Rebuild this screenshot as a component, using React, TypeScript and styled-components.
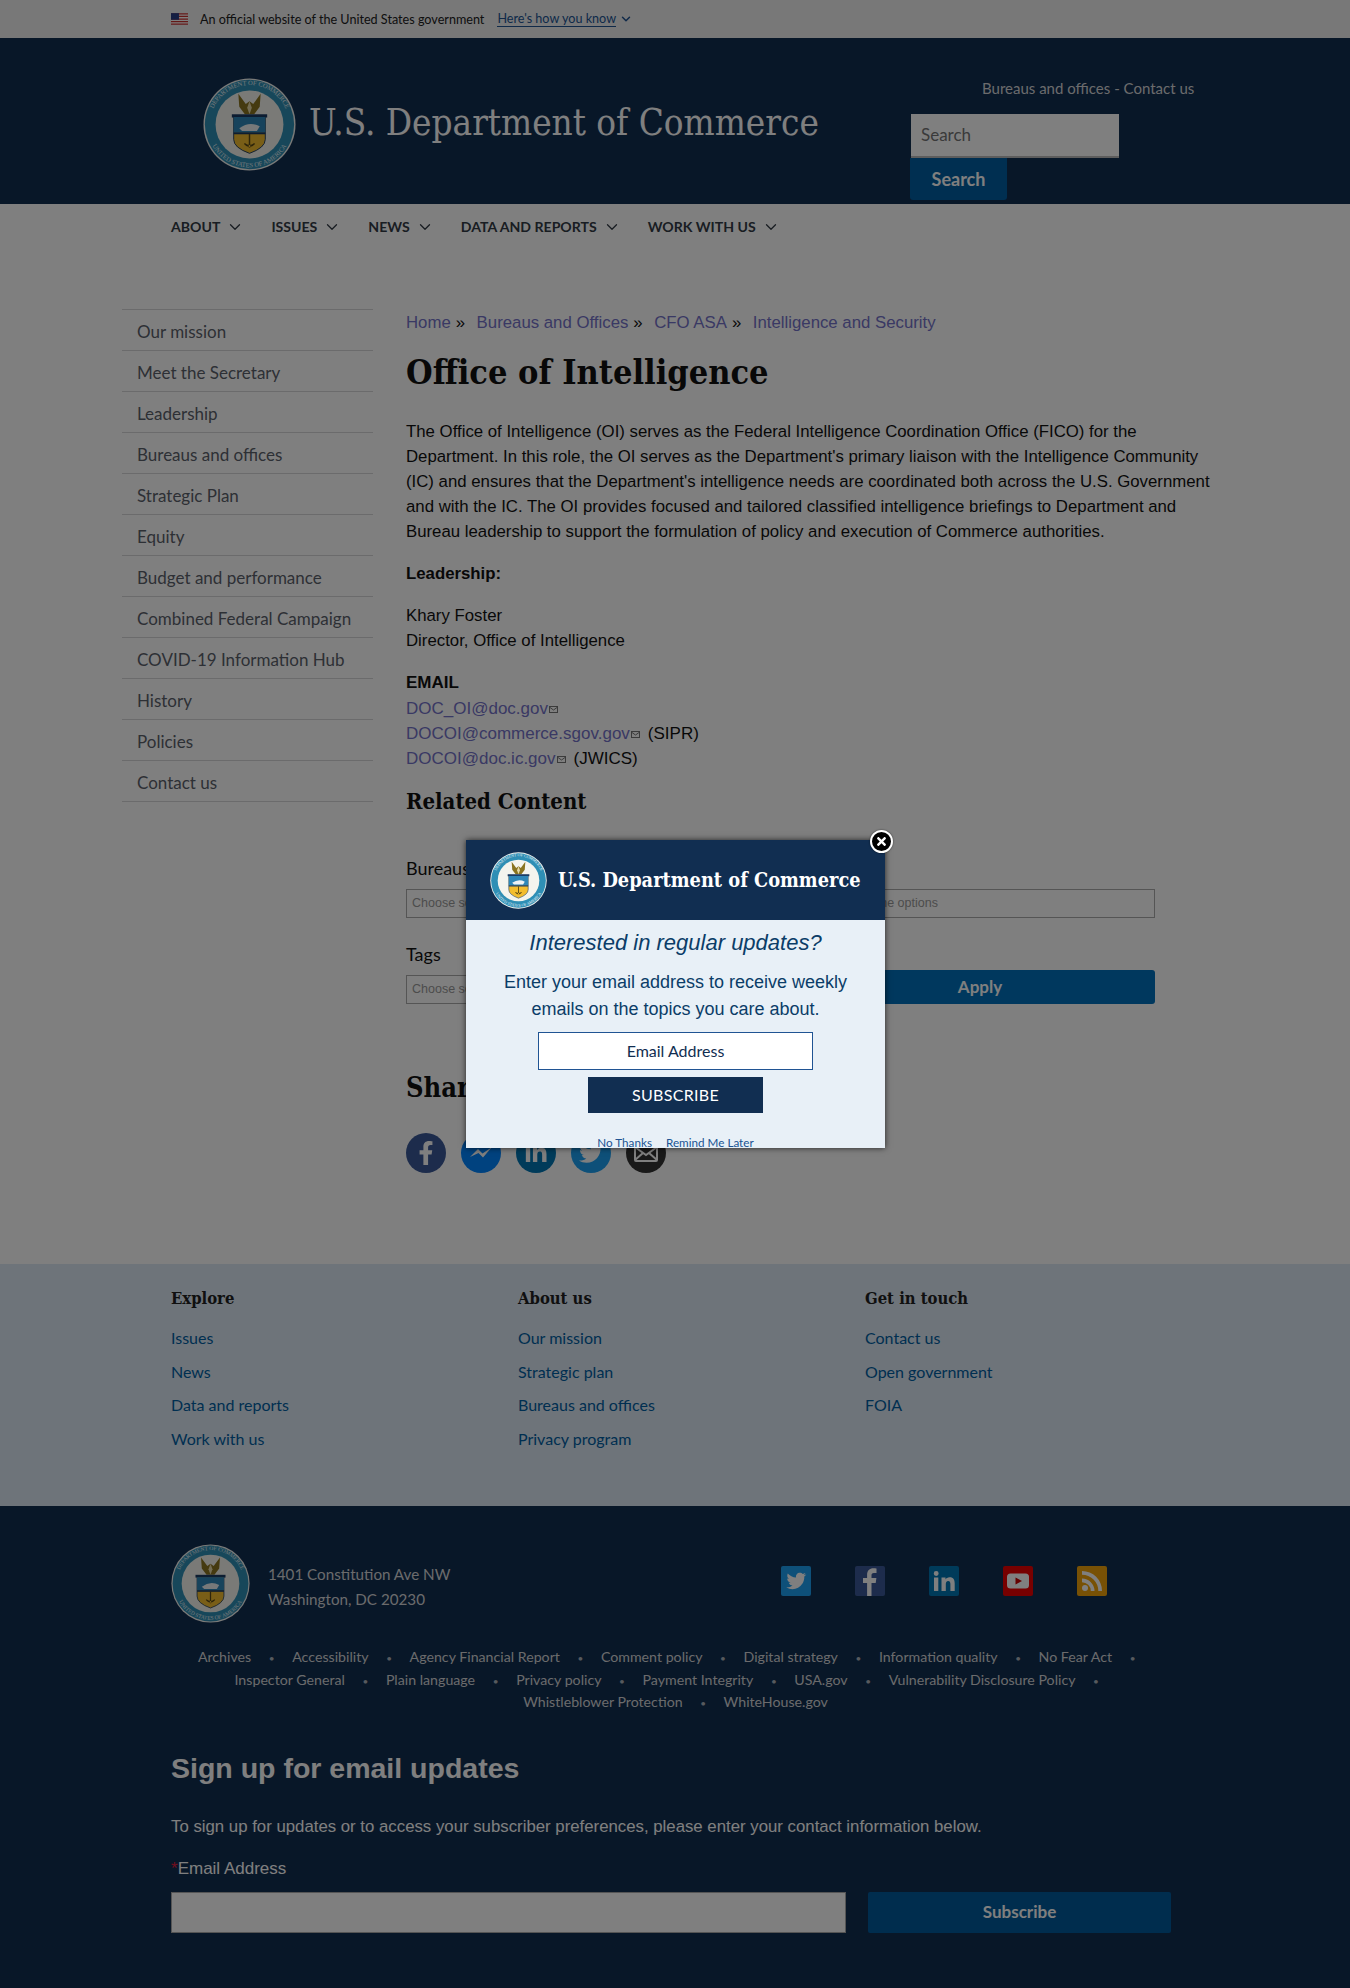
import React from 'react'
import styled, { createGlobalStyle } from 'styled-components'
import { ChevronDown } from 'lucide-react'
import { FaFacebookF, FaLinkedinIn, FaTwitter, FaTimes } from 'react-icons/fa'

const sans = `'Lato', 'Noto Sans', sans-serif`
const serif = `'DejaVu Serif Condensed', 'DejaVu Serif', serif`
const arial = `'Liberation Sans', Arial, sans-serif`

const GlobalStyle = createGlobalStyle`
  html, body { margin: 0; padding: 0; background: #fff; }
  * { box-sizing: border-box; }
  a { text-decoration: none; color: inherit; }
`

const Page = styled.div`
  position: relative;
  width: 1350px;
  height: 1988px;
  overflow: hidden;
  font-family: ${sans};
  background: #fff;
`

const GovBanner = styled.div`
  height: 38px;
  background: #f0f0f0;
  padding-left: 171px;
  display: flex;
  align-items: center;
  font-size: 12.6px;
  color: #212121;
`
const Flag = styled.svg`
  width: 17px;
  height: 12px;
  margin-right: 12px;
`
const HowLink = styled.a`
  color: #205493;
  border-bottom: 1px solid #205493;
  margin-left: 13px;
`

const Header = styled.header`
  height: 166px;
  background: #112e51;
  display: flex;
  padding: 40px 0 0 203px;
`
const SiteTitle = styled.div`
  font-family: ${serif};
  font-size: 36.5px;
  color: #fff;
  margin: 23px 0 0 13px;
  width: 600px;
  white-space: nowrap;
`
const HeaderRight = styled.div`
  display: flex;
  flex-direction: column;
  align-items: flex-start;
  margin-left: 2px;
`
const TopLinks = styled.div`
  font-size: 15px;
  color: #d6d7d9;
  margin: 0 0 16px 71px;
  line-height: 20px;
  white-space: nowrap;
`
const HeaderSearch = styled.div`
  width: 208px;
  height: 44px;
  background: #fff;
  border-bottom: 2px solid #bbb;
  color: #757575;
  font-size: 17px;
  line-height: 42px;
  padding-left: 10px;
`
const HeaderSearchButton = styled.div`
  width: 97px;
  height: 42px;
  margin-left: -1px;
  background: #005ea2;
  color: #fff;
  font-size: 18px;
  font-weight: 700;
  text-align: center;
  line-height: 42px;
  border-radius: 0 0 3px 3px;
`

const Nav = styled.nav`
  height: 105px;
  padding: 12px 0 0 171px;
  display: flex;
  align-items: flex-start;
  gap: 27px;
  background: #fff;
`
const NavItem = styled.a`
  display: flex;
  align-items: center;
  gap: 6px;
  font-size: 14.1px;
  font-weight: 700;
  color: #323a45;
  line-height: 22px;
`

const Content = styled.div`
  display: flex;
  height: 955px;
  padding-left: 122px;
`
const Sidebar = styled.ul`
  list-style: none;
  margin: 0;
  padding: 0;
  width: 251px;
  align-self: flex-start;
  border-top: 1px solid #d6d7d9;
`
const SideItem = styled.li`
  height: 41px;
  line-height: 43px;
  padding-left: 15px;
  font-size: 17px;
  color: #5b616b;
  border-bottom: 1px solid #d6d7d9;
`

const Main = styled.main`
  width: 810px;
  margin-left: 33px;
  font-family: ${arial};
  font-size: 16.8px;
  line-height: 25px;
  color: #111;
`
const Crumbs = styled.div`
  font-size: 16.8px;
  display: flex;
  gap: 5px;
  line-height: 26px;
  padding-top: 1px;
`
const Crumb = styled.a`
  color: #7472c8;
  & + span { margin-right: 6.500px; }
`
const Title = styled.h1`
  font-family: ${serif};
  font-size: 34px;
  line-height: 44px;
  font-weight: 700;
  margin: 14px 0 25px;
  color: #111;
`
const Para = styled.p`
  margin: 0 0 17px;
`
const BoldLine = styled.strong`
  display: block;
`
const EmailHead = styled.div`
  font-weight: 700;
  font-size: 17px;
  line-height: 26px;
`
const MailLine = styled.div`
  font-size: 17px;
`
const MailLink = styled.a`
  color: #7472c8;
`
const MailGlyph = styled.svg`
  width: 9px;
  height: 7px;
  margin: 0 8px 0 1px;
  vertical-align: 1px;
`
const Related = styled.h2`
  font-family: ${serif};
  font-size: 22px;
  line-height: 30px;
  font-weight: 700;
  margin: 15px 0 0;
`
const FilterRow = styled.div<{ $top: number }>`
  display: flex;
  margin-top: ${p => p.$top}px;
  width: 749px;
  justify-content: space-between;
  align-items: flex-end;
`
const Field = styled.div<{ $w: number }>`
  width: ${p => p.$w}px;
`
const FieldLabel = styled.div`
  font-family: ${sans};
  font-size: 18px;
  line-height: 24px;
  margin-bottom: 9px;
`
const Choose = styled.div`
  height: 29px;
  border: 1px solid #aaa;
  background: #fff;
  color: #999;
  font-size: 12.5px;
  line-height: 27px;
  padding-left: 5px;
`
const ApplyButton = styled.div`
  height: 34px;
  width: 350px;
  background: #0071bc;
  border-radius: 3px;
  color: #fff;
  font-family: ${sans};
  font-weight: 700;
  font-size: 17px;
  text-align: center;
  line-height: 34px;
`
const ShareTitle = styled.h2`
  font-family: ${serif};
  font-size: 27px;
  line-height: 34px;
  font-weight: 700;
  margin: 67px 0 28px;
`
const ShareRow = styled.div`
  display: flex;
  gap: 15px;
`
const ShareIcon = styled.a<{ $bg: string }>`
  width: 40px;
  height: 40px;
  border-radius: 50%;
  background: ${p => p.$bg};
  color: #fff;
  display: flex;
  align-items: center;
  justify-content: center;
  font-size: 24px;
`

const FooterLinks = styled.section`
  height: 242px;
  background: #dce8f4;
  padding: 24px 0 0 171px;
  display: grid;
  grid-template-columns: repeat(3, 347px);
`
const FootHeading = styled.div`
  font-family: ${serif};
  font-weight: 700;
  font-size: 16.5px;
  line-height: 22px;
  color: #212121;
  margin-bottom: 11px;
`
const FootLink = styled.a`
  display: block;
  font-size: 16px;
  line-height: 33.5px;
  color: #005ea2;
`

const FooterDark = styled.footer`
  height: 482px;
  background: #112e51;
  padding: 38px 179px 0 171px;
  color: #fff;
`
const FootTop = styled.div`
  display: flex;
  align-items: center;
  height: 79px;
`
const Address = styled.div`
  font-size: 15.2px;
  line-height: 25px;
  color: #d6d7d9;
  margin: 7px 0 0 18px;
  width: 513px;
`
const Socials = styled.div`
  display: flex;
  gap: 44px;
  margin-top: -6px;
`
const SocialBox = styled.svg`
  width: 30px;
  height: 30px;
  display: block;
`
const LegalLinks = styled.div`
  margin: 23px 0 0 -3px;
  width: 1015px;
  text-align: center;
  font-size: 14.2px;
  line-height: 22.5px;
  color: #d6d7d9;
`
const Dot = styled.span`
  display: inline-block;
  width: 41px;
  text-align: center;
  font-size: 10px;
  line-height: 1;
  opacity: .8;
`
const SignTitle = styled.h2`
  font-family: ${arial};
  font-size: 28.5px;
  line-height: 34px;
  font-weight: 700;
  color: #fff;
  margin: 37px 0 0;
`
const SignPara = styled.p`
  font-family: ${arial};
  font-size: 16.8px;
  line-height: 24px;
  color: #fff;
  margin: 30px 0 0;
`
const SignLabel = styled.div`
  font-family: ${arial};
  font-size: 17px;
  line-height: 22px;
  color: #fff;
  margin-top: 19px;
`
const Req = styled.span`
  color: #e31c3d;
`
const SignRow = styled.div`
  display: flex;
  gap: 22px;
  margin-top: 12px;
`
const SignInput = styled.div`
  width: 675px;
  height: 41px;
  background: #fff;
  border: 1px solid #aaa;
`
const SignButton = styled.div`
  width: 303px;
  height: 41px;
  background: #005a9c;
  border-radius: 2px;
  color: #fff;
  font-size: 17px;
  font-weight: 700;
  text-align: center;
  line-height: 40px;
`

const Overlay = styled.div`
  position: absolute;
  inset: 0;
  background: rgba(0, 0, 0, 0.5);
`
const Modal = styled.div`
  position: absolute;
  left: 466px;
  top: 840px;
  width: 419px;
  height: 308px;
  background: #e8f0f7;
  box-shadow: 0 0 6px rgba(0, 0, 0, 0.7);
  text-align: center;
`
const ModalHead = styled.div`
  height: 80px;
  background: #112e51;
  display: flex;
  align-items: center;
  padding-left: 24px;
`
const ModalBrand = styled.div`
  font-family: ${serif};
  font-weight: 700;
  font-size: 19.8px;
  color: #fff;
  margin-left: 11px;
  white-space: nowrap;
`
const ModalClose = styled.div`
  position: absolute;
  top: -10px;
  right: -8px;
  width: 23px;
  height: 23px;
  border-radius: 50%;
  background: #000;
  border: 2px solid #fff;
  color: #fff;
  display: flex;
  align-items: center;
  justify-content: center;
  font-size: 13px;
  box-shadow: 0 0 2px rgba(0,0,0,.6);
`
const ModalTitle = styled.div`
  font-family: ${arial};
  font-style: italic;
  font-size: 22px;
  line-height: 26px;
  color: #0b3d68;
  margin-top: 10px;
`
const ModalText = styled.div`
  font-family: ${arial};
  font-size: 18px;
  line-height: 27px;
  color: #0b3d68;
  margin-top: 13px;
`
const ModalInput = styled.div`
  width: 275px;
  height: 38px;
  margin: 9px auto 0;
  background: #fff;
  border: 1px solid #205493;
  font-size: 16px;
  line-height: 36px;
  color: #112e51;
`
const ModalButton = styled.div`
  width: 175px;
  height: 36px;
  margin: 7px auto 0;
  background: #112e51;
  color: #fff;
  font-size: 16px;
  line-height: 36px;
  letter-spacing: .3px;
`
const ModalFoot = styled.div`
  display: flex;
  justify-content: center;
  gap: 14px;
  margin-top: 22px;
  font-size: 11.7px;
  line-height: 14px;
  color: #205493;
`

// simplified department seal, scales with the size prop
const Seal: React.FC<{ size: number }> = ({ size }) => (
  <svg width={size} height={size} viewBox="0 0 100 100" style={{ flex: 'none' }}>
    <defs>
      <path id="sealTop" d="M7.500 50a42.500 42.500 0 0 1 85 0" />
      <path id="sealBottom" d="M4 50a46 46 0 0 0 92 0" />
    </defs>
    <circle cx="50" cy="50" r="49.500" fill="#f4f4f0" />
    <circle cx="50" cy="50" r="48" fill="#2f8fb5" />
    <circle cx="50" cy="50" r="36.500" fill="#f4f4ee" />
    <text fontFamily="'Liberation Serif', serif" fontSize="7" fill="#e6f1f5" textAnchor="middle">
      <textPath href="#sealTop" startOffset="50%">DEPARTMENT OF COMMERCE</textPath>
    </text>
    <text fontFamily="'Liberation Serif', serif" fontSize="7" fill="#e6f1f5" textAnchor="middle">
      <textPath href="#sealBottom" startOffset="50%">UNITED STATES OF AMERICA</textPath>
    </text>
    <path d="M38 17 L46 28 L50 25 L54 28 L62 17 L61 31 L55 39 H45 L39 31 Z" fill="#8a7420" />
    <path d="M50 25 L47.500 32 L50 39 L52.500 32 Z" fill="#e6d9a8" />
    <rect x="31" y="39" width="38" height="3.500" fill="#1b3a63" />
    <path d="M33 42 H67 V66 Q67 75 50 81 Q33 75 33 66 Z" fill="#f3bd2e" stroke="#1b3a63" strokeWidth="1" />
    <path d="M33 42 H67 V59 H33 Z" fill="#2f87b8" />
    <path d="M39 54 Q50 46 61 52 L58 57 H42 Z" fill="#eef2f5" />
    <rect x="33" y="58.500" width="34" height="2" fill="#1b3a63" />
    <path d="M49.200 60 H50.800 V75 H49.200 Z M44 71 Q50 78 56 71 L55 70 Q50 74 45 70 Z" fill="#5d4a14" />
  </svg>
)

const Envelope = () => (
  <MailGlyph viewBox="0 0 9 7">
    <rect x="0.5" y="0.5" width="8" height="6" fill="none" stroke="#777" />
    <path d="M1 1.500 L4.500 4 L8 1.500" fill="none" stroke="#777" />
  </MailGlyph>
)

const sideLinks = [
  'Our mission', 'Meet the Secretary', 'Leadership', 'Bureaus and offices', 'Strategic Plan', 'Equity',
  'Budget and performance', 'Combined Federal Campaign', 'COVID-19 Information Hub', 'History', 'Policies', 'Contact us',
]
const navItems = ['ABOUT', 'ISSUES', 'NEWS', 'DATA AND REPORTS', 'WORK WITH US']
const legal = [
  'Archives', 'Accessibility', 'Agency Financial Report', 'Comment policy', 'Digital strategy', 'Information quality', 'No Fear Act',
  'Inspector General', 'Plain language', 'Privacy policy', 'Payment Integrity', 'USA.gov', 'Vulnerability Disclosure Policy',
  'Whistleblower Protection', 'WhiteHouse.gov',
]

const footerCols = [
  { head: 'Explore', links: ['Issues', 'News', 'Data and reports', 'Work with us'] },
  { head: 'About us', links: ['Our mission', 'Strategic plan', 'Bureaus and offices', 'Privacy program'] },
  { head: 'Get in touch', links: ['Contact us', 'Open government', 'FOIA'] },
]

const App: React.FC = () => (
  <Page>
    <GlobalStyle />
    <GovBanner>
      <Flag viewBox="0 0 16 11">
        <rect width="16" height="11" fill="#fff" />
        <path d="M0 0H16V1.200H0ZM0 2.500H16V3.700H0ZM0 5H16V6.200H0ZM0 7.400H16V8.600H0ZM0 9.800H16V11H0Z" fill="#c8312f" />
        <rect width="7.500" height="6.200" fill="#2b3f86" />
      </Flag>
      An official website of the United States government
      <HowLink>Here's how you know</HowLink>
      <ChevronDown size={14} strokeWidth={2.5} color="#205493" style={{ marginLeft: 3 }} />
    </GovBanner>
    <Header>
      <Seal size={93} />
      <SiteTitle>U.S. Department of Commerce</SiteTitle>
      <HeaderRight>
        <TopLinks>Bureaus and offices - Contact us</TopLinks>
        <HeaderSearch>Search</HeaderSearch>
        <HeaderSearchButton>Search</HeaderSearchButton>
      </HeaderRight>
    </Header>
    <Nav>
      {navItems.map(n => (
        <NavItem key={n}>
          {n}
          <ChevronDown size={18} strokeWidth={1.75} />
        </NavItem>
      ))}
    </Nav>
    <Content>
      <Sidebar>
        {sideLinks.map(s => <SideItem key={s}>{s}</SideItem>)}
      </Sidebar>
      <Main>
        <Crumbs>
          <Crumb>Home</Crumb><span>»</span>
          <Crumb>Bureaus and Offices</Crumb><span>»</span>
          <Crumb>CFO ASA</Crumb><span>»</span>
          <Crumb>Intelligence and Security</Crumb>
        </Crumbs>
        <Title>Office of Intelligence</Title>
        <Para>
          The Office of Intelligence (OI) serves as the Federal Intelligence Coordination Office (FICO) for the
          Department. In this role, the OI serves as the Department's primary liaison with the Intelligence Community
          (IC) and ensures that the Department's intelligence needs are coordinated both across the U.S. Government
          and with the IC. The OI provides focused and tailored classified intelligence briefings to Department and
          Bureau leadership to support the formulation of policy and execution of Commerce authorities.
        </Para>
        <Para><BoldLine>Leadership:</BoldLine></Para>
        <Para>Khary Foster<br />Director, Office of Intelligence</Para>
        <EmailHead>EMAIL</EmailHead>
        <MailLine><MailLink>DOC_OI@doc.gov</MailLink><Envelope /></MailLine>
        <MailLine><MailLink>DOCOI@commerce.sgov.gov</MailLink><Envelope />(SIPR)</MailLine>
        <MailLine><MailLink>DOCOI@doc.ic.gov</MailLink><Envelope />(JWICS)</MailLine>
        <Related>Related Content</Related>
        <FilterRow $top={40}>
          <Field $w={384}><FieldLabel>Bureaus</FieldLabel><Choose>Choose some options</Choose></Field>
          <Field $w={344}><FieldLabel>&nbsp;</FieldLabel><Choose>Choose some options</Choose></Field>
        </FilterRow>
        <FilterRow $top={24}>
          <Field $w={384}><FieldLabel>Tags</FieldLabel><Choose>Choose some options</Choose></Field>
          <ApplyButton>Apply</ApplyButton>
        </FilterRow>
        <ShareTitle>Share</ShareTitle>
        <ShareRow>
          <ShareIcon $bg="#3b5998"><FaFacebookF /></ShareIcon>
          <ShareIcon $bg="#0084ff">
            <svg width="28" height="28" viewBox="0 0 28 28">
              <path d="M3 18 L11 10 L15.500 14.500 L25 8 L16 18.500 L11.500 14 Z" fill="#fff" />
            </svg>
          </ShareIcon>
          <ShareIcon $bg="#0077b5"><FaLinkedinIn /></ShareIcon>
          <ShareIcon $bg="#1da1f2"><FaTwitter /></ShareIcon>
          <ShareIcon $bg="#333">
            <svg width="28" height="28" viewBox="0 0 28 28" fill="none" stroke="#fff" strokeWidth="2">
              <rect x="3" y="7" width="22" height="15" rx="1" />
              <path d="M3 8 L14 16 L25 8 M3 21 L11 14 M25 21 L17 14" />
            </svg>
          </ShareIcon>
        </ShareRow>
      </Main>
    </Content>
    <FooterLinks>
      {footerCols.map(c => (
        <div key={c.head}>
          <FootHeading>{c.head}</FootHeading>
          {c.links.map(l => <FootLink key={l}>{l}</FootLink>)}
        </div>
      ))}
    </FooterLinks>
    <FooterDark>
      <FootTop>
        <Seal size={79} />
        <Address>1401 Constitution Ave NW<br />Washington, DC 20230</Address>
        <Socials>
          <SocialBox viewBox="0 0 30 30">
            <rect width="30" height="30" rx="2" fill="#1da1f2" />
            <path d="M25 8.600c-.8.3-1.600.6-2.400.7.900-.5 1.500-1.300 1.800-2.300-.800.500-1.700.8-2.600 1-1.700-1.800-4.600-1.500-6 .2-.8 1-1 2.200-.7 3.400C11.700 11.400 8.800 9.900 6.800 7.500c-1.100 1.900-.5 4.300 1.300 5.500-.700 0-1.300-.2-1.900-.5 0 2 1.400 3.700 3.300 4.100-.600.200-1.200.2-1.800.1.500 1.600 2 2.800 3.800 2.800-1.800 1.400-4.100 2-6.300 1.800 5.500 3.500 12.700 1.900 16.100-3.500 1.400-2.200 2.100-4.800 2-7.400.8-.5 1.500-1.200 2-1.900z" fill="#fff" />
          </SocialBox>
          <SocialBox viewBox="0 0 30 30">
            <rect width="30" height="30" rx="2" fill="#3b5998" />
            <path d="M16.500 30V17h4.200l.7-5h-4.900V9.300c0-1.400.5-2.400 2.400-2.400h2.600V2.400C21 2.300 19.700 2.200 18.400 2.200c-3.800 0-6.300 2.300-6.300 6.500V12H8v5h4.100v13z" fill="#fff" />
          </SocialBox>
          <SocialBox viewBox="0 0 30 30">
            <rect width="30" height="30" rx="2" fill="#0077b5" />
            <path d="M5 11.500h4.300V25H5zM7.200 5a2.400 2.400 0 1 1 0 4.900 2.400 2.400 0 0 1 0-4.900zM12.500 11.500h4v1.900c.700-1.200 2.100-2.200 4.100-2.200 4 0 5.100 2.600 5.100 6.200V25h-4.300v-6.800c0-1.700-.4-3.200-2.200-3.200s-2.400 1.500-2.400 3.200V25h-4.300z" fill="#fff" />
          </SocialBox>
          <SocialBox viewBox="0 0 30 30">
            <rect width="30" height="30" rx="2" fill="#e00" />
            <rect x="4" y="7.500" width="22" height="15" rx="3.500" fill="#fff" />
            <path d="M12.500 11.500 L19 15 L12.500 18.500Z" fill="#c00" />
          </SocialBox>
          <SocialBox viewBox="0 0 30 30">
            <rect width="30" height="30" rx="2" fill="#f0a30a" />
            <circle cx="8" cy="22" r="3" fill="#fff" />
            <path d="M5 12.500a12.500 12.500 0 0 1 12.500 12.500h-3.700A8.800 8.800 0 0 0 5 16.200zM5 5a20 20 0 0 1 20 20h-3.700A16.300 16.300 0 0 0 5 8.700z" fill="#fff" />
          </SocialBox>
        </Socials>
      </FootTop>
      <LegalLinks>
        {legal.map(l => (
          <React.Fragment key={l}>
            {l}
            {l !== 'WhiteHouse.gov' && <Dot>•</Dot>}
            {(l === 'No Fear Act' || l === 'Vulnerability Disclosure Policy') && <br />}
          </React.Fragment>
        ))}
      </LegalLinks>
      <SignTitle>Sign up for email updates</SignTitle>
      <SignPara>To sign up for updates or to access your subscriber preferences, please enter your contact information below.</SignPara>
      <SignLabel><Req>*</Req>Email Address</SignLabel>
      <SignRow>
        <SignInput />
        <SignButton>Subscribe</SignButton>
      </SignRow>
    </FooterDark>
    <Overlay />
    <Modal>
      <ModalHead>
        <Seal size={57} />
        <ModalBrand>U.S. Department of Commerce</ModalBrand>
      </ModalHead>
      <ModalClose><FaTimes /></ModalClose>
      <ModalTitle>Interested in regular updates?</ModalTitle>
      <ModalText>Enter your email address to receive weekly<br />emails on the topics you care about.</ModalText>
      <ModalInput>Email Address</ModalInput>
      <ModalButton>SUBSCRIBE</ModalButton>
      <ModalFoot><span>No Thanks</span><span>Remind Me Later</span></ModalFoot>
    </Modal>
  </Page>
)

export default App
